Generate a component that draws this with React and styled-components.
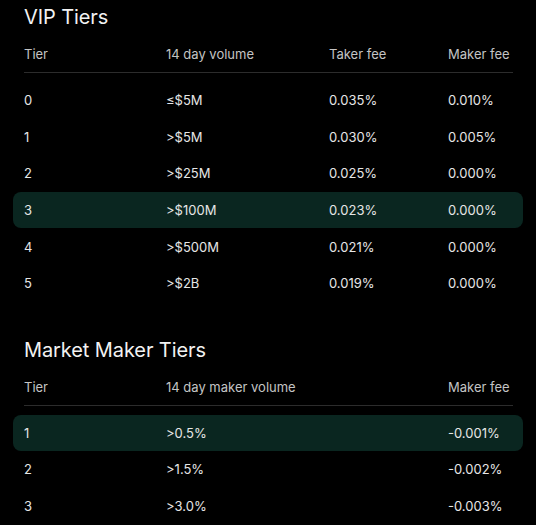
import React from 'react'
import styled, { createGlobalStyle } from 'styled-components'

const GlobalStyle = createGlobalStyle`
  html, body {
    margin: 0;
    padding: 0;
    background: #000;
  }
  body {
    font-family: Inter, "Noto Sans", sans-serif;
    color: #e8e8e8;
    -webkit-font-smoothing: antialiased;
  }
`

const Page = styled.div`
  padding: 5px 13px 0;
  width: 510px;
`

const Section = styled.section`
  & + & {
    margin-top: 36px;
  }
`

const Title = styled.h2`
  margin: 0;
  padding-left: 11px;
  font-size: 20px;
  line-height: 24px;
  font-weight: 400;
  color: #f2f2f2;
  letter-spacing: -0.1px;
`

const Row = styled.div`
  display: grid;
  grid-template-columns: ${({ cols }) => cols};
  align-items: center;
  height: ${({ head }) => (head ? '36px' : '36.6px')};
  padding: 0 11px;
  margin-top: ${({ head }) => (head ? '7px' : '0')};
  font-size: 13px;
  color: ${({ head }) => (head ? '#c4c4c4' : '#e6e6e6')};
  border-radius: 8px;
  background: ${({ active }) => (active ? '#0a2620' : 'transparent')};
`

const Divider = styled.div`
  height: 1px;
  margin: 0 10px 9px 11px;
  background: #2c2c2c;
`

const vipCols = '142px 163px 119px 1fr'
const mmCols = '142px 282px 1fr'

const vip = [
  ['0', '≤$5M', '0.035%', '0.010%'],
  ['1', '>$5M', '0.030%', '0.005%'],
  ['2', '>$25M', '0.025%', '0.000%'],
  ['3', '>$100M', '0.023%', '0.000%'],
  ['4', '>$500M', '0.021%', '0.000%'],
  ['5', '>$2B', '0.019%', '0.000%'],
]

const mm = [
  ['1', '>0.5%', '-0.001%'],
  ['2', '>1.5%', '-0.002%'],
  ['3', '>3.0%', '-0.003%'],
]

function Table({ title, cols, headers, rows, activeIndex }) {
  return (
    <Section>
      <Title>{title}</Title>
      <Row head cols={cols}>
        {headers.map((h) => (
          <span key={h}>{h}</span>
        ))}
      </Row>
      <Divider />
      {rows.map((r, i) => (
        <Row key={i} cols={cols} active={i === activeIndex}>
          {r.map((c, j) => (
            <span key={j}>{c}</span>
          ))}
        </Row>
      ))}
    </Section>
  )
}

export default function App() {
  return (
    <>
      <GlobalStyle />
      <Page>
        <Table
          title='VIP Tiers'
          cols={vipCols}
          headers={['Tier', '14 day volume', 'Taker fee', 'Maker fee']}
          rows={vip}
          activeIndex={3}
        />
        <Table
          title='Market Maker Tiers'
          cols={mmCols}
          headers={['Tier', '14 day maker volume', 'Maker fee']}
          rows={mm}
          activeIndex={0}
        />
      </Page>
    </>
  )
}
